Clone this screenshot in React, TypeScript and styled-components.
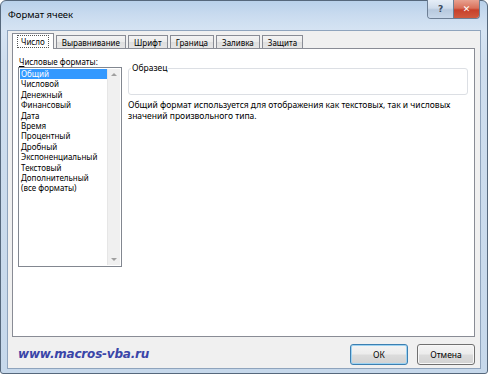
import React from "react";
import styled, { createGlobalStyle, css } from "styled-components";

const Global = createGlobalStyle`
  html, body { margin: 0; padding: 0; background: #fff; }
  body { width: 488px; height: 374px; overflow: hidden; font-family: "Noto Sans", "Open Sans", sans-serif; }
  * { box-sizing: border-box; }
`;

const Window = styled.div`
  width: 488px;
  height: 374px;
  border: 1px solid #56687c;
  border-radius: 6px 6px 3px 3px;
  background: linear-gradient(180deg, #b9d1ea 0px, #c9dbef 14px, #d6e4f3 30px, #cfdeee 60px, #c6d8eb 100%);
  padding: 0 6px 4px 6px;
  display: flex;
  flex-direction: column;
`;

const TitleBar = styled.div`
  height: 29px;
  display: flex;
  align-items: flex-start;
`;

const Title = styled.div`
  font-size: 9.5px;
  color: #000;
  padding: 7px 0 0 1px;
  flex: 1;
`;

const CaptionButtons = styled.div`
  display: flex;
  margin-top: -1px;
  margin-right: 1px;
  border: 1px solid #6d7f95;
  border-top: none;
  border-radius: 0 0 4px 4px;
  overflow: hidden;
  height: 19px;
`;

const CapBtn = styled.div<{ $close?: boolean }>`
  height: 100%;
  display: flex;
  align-items: center;
  justify-content: center;
  font-family: "DejaVu Sans", sans-serif;
  font-weight: bold;
  ${(p) =>
    p.$close
      ? css`
          width: 25px;
          background: linear-gradient(180deg, #e8a190 0%, #d9705a 45%, #c7402a 55%, #d05a3e 100%);
          color: #fff;
          font-size: 9px;
        `
      : css`
          width: 26px;
          border-right: 1px solid #6d7f95;
          background: linear-gradient(180deg, #e6eef7 0%, #cfdceb 45%, #b7c9de 55%, #c7d7ea 100%);
          color: #3b4b5e;
          font-size: 9px;
        `}
`;

const Client = styled.div`
  flex: 1;
  background: #f0f0f0;
  border: 1px solid #8fa4bd;
  display: flex;
  flex-direction: column;
  padding: 2px 5px 0 4px;
`;

const TabStrip = styled.div`
  display: flex;
  align-items: flex-end;
  height: 15px;
  padding-left: 2px;
  position: relative;
  z-index: 1;
`;

const Tab = styled.div<{ $active?: boolean }>`
  font-size: 8px;
  color: #000;
  border: 1px solid #898c95;
  border-bottom: none;
  display: flex;
  align-items: center;
  justify-content: center;
  margin-right: 2px;
  ${(p) =>
    p.$active
      ? css`
          height: 16px;
          margin-bottom: -1px;
          background: #fff;
          padding: 0 5px;
          margin-left: -2px;
          span { outline: 1px dotted #555; padding: 0 3px; }
        `
      : css`
          height: 13px;
          background: linear-gradient(180deg, #f3f3f3 0%, #ebebeb 50%, #dedede 51%, #e5e5e5 100%);
          padding: 0 5px;
        `}
`;

const Panel = styled.div`
  height: 289px;
  background: #fff;
  border: 1px solid #898c95;
  display: flex;
  padding: 8px 6px 0 5px;
  gap: 6px;
`;

const LeftCol = styled.div`
  width: 104px;
  display: flex;
  flex-direction: column;
`;

const Label = styled.div`
  font-size: 8px;
  line-height: 10px;
  color: #000;
  padding-left: 1px;
  u { text-decoration: underline; }
`;

const ListBox = styled.div`
  height: 200px;
  border: 1px solid #828790;
  display: flex;
  padding: 1px;
`;

const Items = styled.div`
  flex: 1;
  display: flex;
  flex-direction: column;
`;

const Item = styled.div<{ $sel?: boolean }>`
  font-size: 8px;
  line-height: 10.4px;
  height: 10.4px;
  padding-left: 1px;
  white-space: nowrap;
  color: ${(p) => (p.$sel ? "#fff" : "#000")};
  background: ${(p) => (p.$sel ? "#3399ff" : "transparent")};
`;

const ScrollBar = styled.div`
  width: 13px;
  background: #f0f0f0;
  border-left: 1px solid #e6e6e6;
  display: flex;
  flex-direction: column;
  justify-content: space-between;
  align-items: center;
  padding: 4px 0 4px;
`;

const Arrow = styled.div<{ $down?: boolean }>`
  width: 0;
  height: 0;
  border-left: 3px solid transparent;
  border-right: 3px solid transparent;
  ${(p) =>
    p.$down ? "border-top: 3px solid #a0a0a0;" : "border-bottom: 3px solid #a0a0a0;"}
`;

const RightCol = styled.div`
  flex: 1;
  display: flex;
  flex-direction: column;
  padding-top: 6px;
`;

const Group = styled.fieldset`
  margin: 0;
  padding: 0;
  height: 32px;
  border: 1px solid #dcdfe4;
  border-radius: 3px;
  legend {
    font-size: 8.5px;
    line-height: 10px;
    padding: 0 1px;
    margin-left: 2px;
    color: #000;
  }
`;

const Desc = styled.div`
  font-size: 8.5px;
  line-height: 11px;
  color: #000;
  margin-top: 4px;
  padding-left: 0;
  white-space: nowrap;
`;

const Footer = styled.div`
  flex: 1;
  display: flex;
  align-items: center;
  padding: 3px 0 0 6px;
  gap: 9px;
`;

const Link = styled.div`
  flex: 1;
  font-family: "DejaVu Sans", sans-serif;
  font-weight: bold;
  font-style: italic;
  font-size: 12px;
  color: #3a45a8;
  letter-spacing: -0.2px;
`;

const Button = styled.div<{ $def?: boolean }>`
  width: 58px;
  height: 21px;
  border-radius: 3px;
  display: flex;
  align-items: center;
  justify-content: center;
  font-size: 8.5px;
  color: #000;
  background: linear-gradient(180deg, #f4f4f4 0%, #ececec 48%, #dcdcdc 52%, #d2d2d2 100%);
  border: 1px solid ${(p) => (p.$def ? "#3c7fb1" : "#707070")};
  box-shadow: inset 0 0 0 1px ${(p) => (p.$def ? "#9ed3f2" : "#f8f8f8")};
`;

const formats = [
  "Общий",
  "Числовой",
  "Денежный",
  "Финансовый",
  "Дата",
  "Время",
  "Процентный",
  "Дробный",
  "Экспоненциальный",
  "Текстовый",
  "Дополнительный",
  "(все форматы)",
];

const tabs = ["Число", "Выравнивание", "Шрифт", "Граница", "Заливка", "Защита"];

export default function App() {
  return (
    <>
      <Global />
      <Window>
        <TitleBar>
          <Title>Формат ячеек</Title>
          <CaptionButtons>
            <CapBtn>?</CapBtn>
            <CapBtn $close>✕</CapBtn>
          </CaptionButtons>
        </TitleBar>
        <Client>
          <TabStrip>
            {tabs.map((t, i) => (
              <Tab key={t} $active={i === 0}>
                <span>{t}</span>
              </Tab>
            ))}
          </TabStrip>
          <Panel>
            <LeftCol>
              <Label>
                <u>Ч</u>исловые форматы:
              </Label>
              <ListBox>
                <Items>
                  {formats.map((f, i) => (
                    <Item key={f} $sel={i === 0}>
                      {f}
                    </Item>
                  ))}
                </Items>
                <ScrollBar>
                  <Arrow />
                  <Arrow $down />
                </ScrollBar>
              </ListBox>
            </LeftCol>
            <RightCol>
              <Group>
                <legend>Образец</legend>
              </Group>
              <Desc>
                Общий формат используется для отображения как текстовых, так и числовых
                <br />
                значений произвольного типа.
              </Desc>
            </RightCol>
          </Panel>
          <Footer>
            <Link>www.macros-vba.ru</Link>
            <Button $def>ОК</Button>
            <Button>Отмена</Button>
          </Footer>
        </Client>
      </Window>
    </>
  );
}
